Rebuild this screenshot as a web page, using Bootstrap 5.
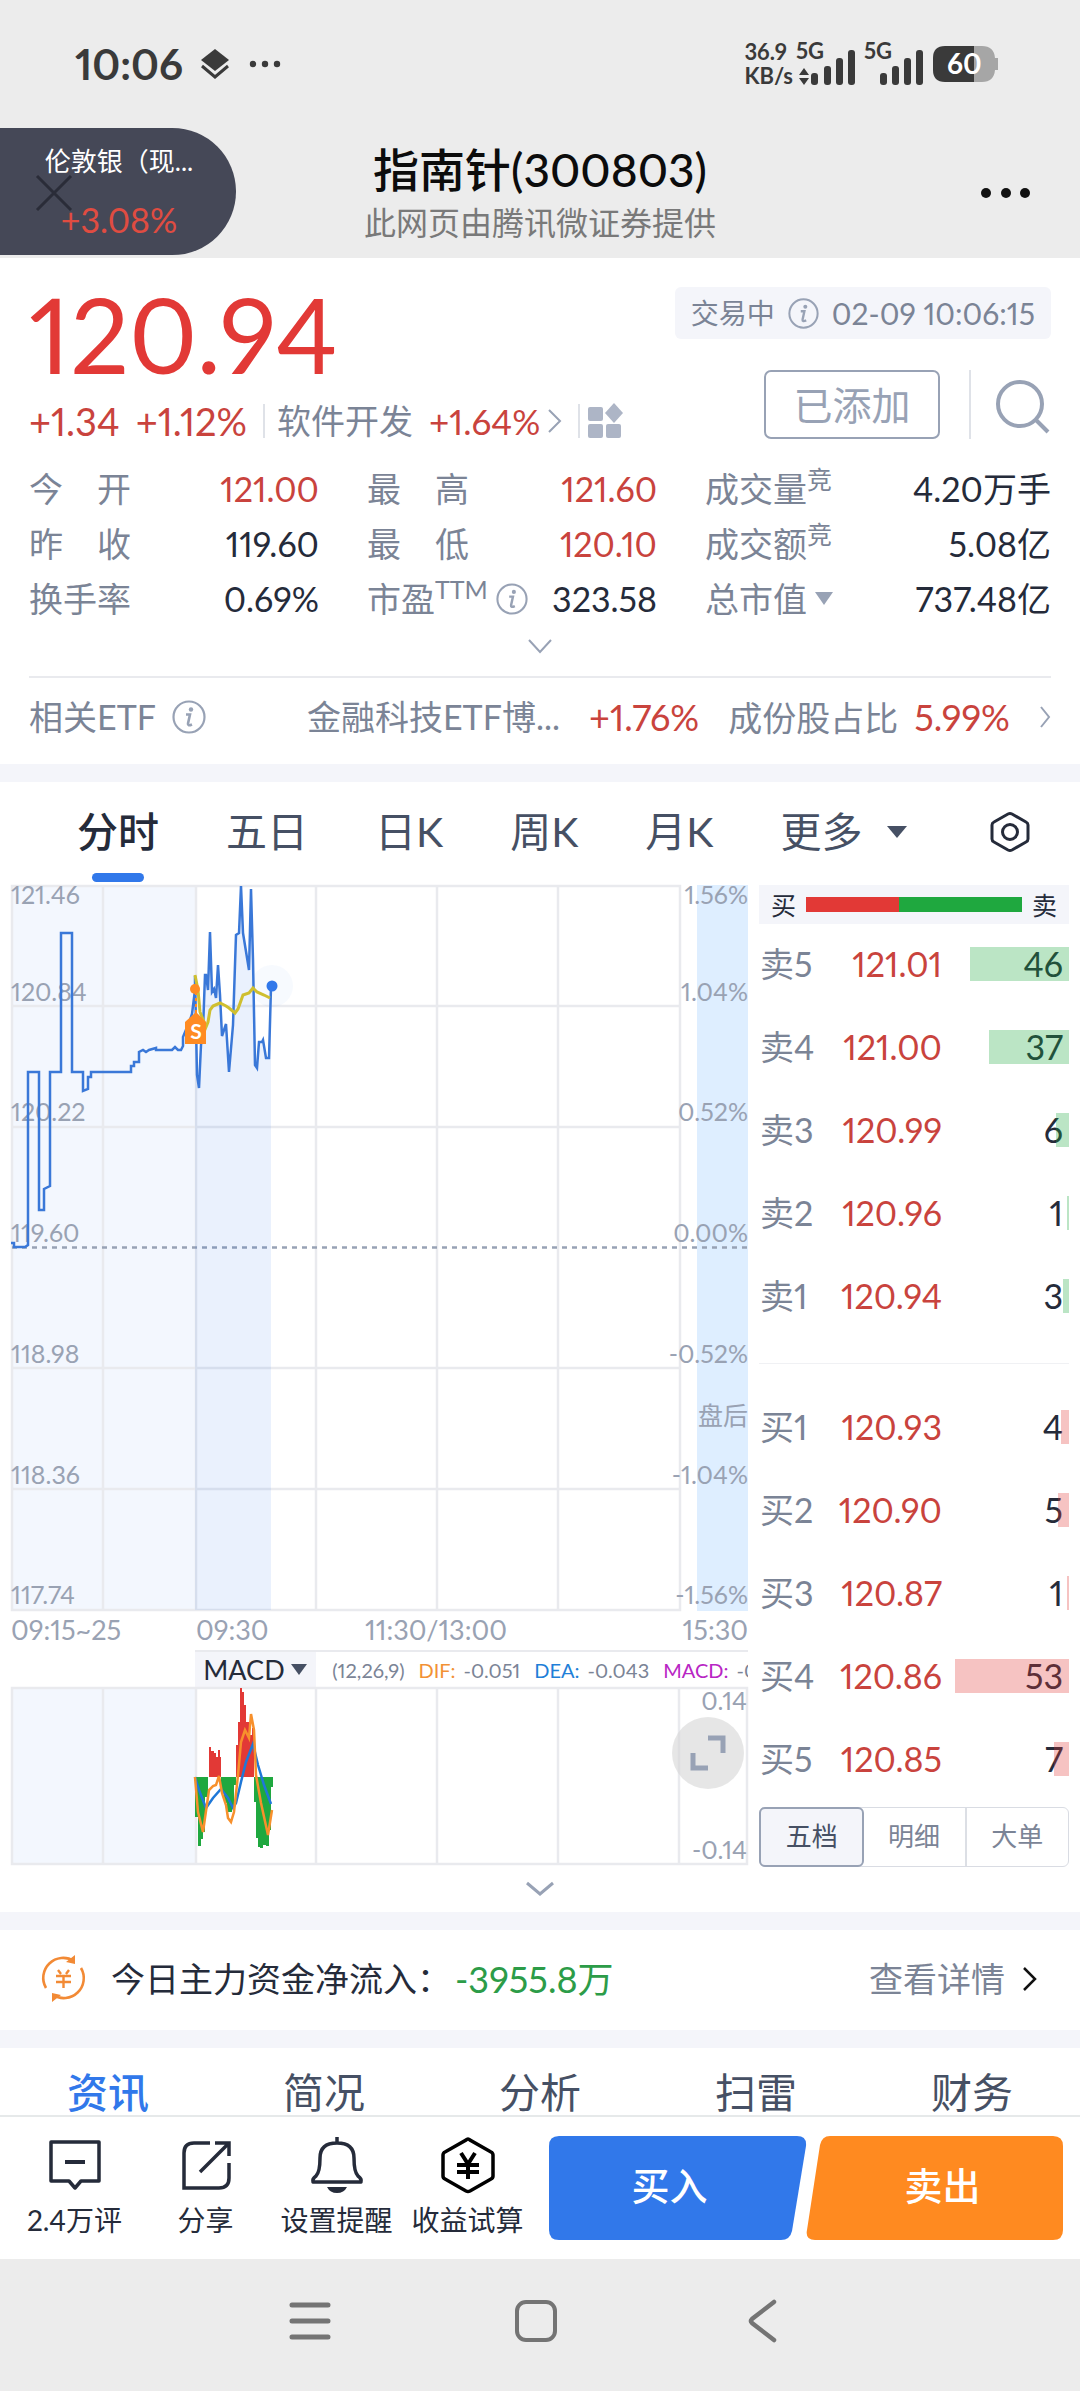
<!DOCTYPE html>
<html lang="zh-CN">
<head>
<meta charset="utf-8">
<meta name="viewport" content="width=device-width, initial-scale=1">
<title>指南针(300803)</title>
<link href="https://cdn.jsdelivr.net/npm/bootstrap@5.3.0/dist/css/bootstrap.min.css" rel="stylesheet">
<style>
  :root { --up:#e23936; --upsoft:#c9433d; --down:#1fa83f; --ink:#252b3a; --mute:#7b8496; --line:#e9eaee; --band:#f4f5fa; --brand:#3178ea; }
  body { font-family: Lato, "Noto Sans CJK SC", sans-serif; font-size: 34px; line-height: 40px; color: var(--ink); background: #fff; font-variant-numeric: proportional-nums; }
  svg { display: block; flex: none; overflow: visible; }
  a { color: inherit; text-decoration: none; }
  button, select { font: inherit; color: inherit; background: none; border: 0; padding: 0; }
  .up { color: var(--upsoft); }
  .mute { color: var(--mute); }
  .band { height: 18px; background: var(--band); }
  .shell { background: #ececec; }
  .statusbar { height: 108px; padding: 20px 81px 0 75px; color: #3a3a3a; }
  .clock { font-size: 42px; line-height: 42px; font-weight: 700; }
  .netinfo { font-size: 22px; line-height: 24px; font-weight: 700; }
  .titlebar { height: 150px; padding-top: 37px; }
  .titlebar h1 { font-size: 46px; line-height: 50px; font-weight: 500; color: #0c0c0c; }
  .titlebar p { font-size: 32px; line-height: 40px; color: #797979; margin-top: 8px; }
  .floatpill { left: 0; top: 20px; width: 236px; height: 127px; border-radius: 0 64px 64px 0; background: #454857; color: #fff; padding: 15px 40px 0 42px; }
  .floatpill .pname { font-size: 26px; line-height: 36px; }
  .floatpill .pchg { color: #e04c41; line-height: 40px; margin-top: 21px; }
  .floatpill svg { left: 35px; top: 46px; }
  .moredots { right: 49px; top: 78px; }
  .quote { padding: 29px 29px 0; }
  .price { font-size: 104px; line-height: 94px; color: var(--up); }
  .chgrow { font-size: 35px; line-height: 34px; }
  .chgrow .big { font-size: 38px; }
  .chgrow .mute { font-size: 34px; }
  .vsep { width: 2px; height: 34px; background: #dfe2e8; }
  .timetag { background: var(--band); border-radius: 6px; height: 52px; padding: 0 16px; font-size: 28px; gap: 13px; }
  .timetag time { font-size: 30px; }
  .actions { margin-top: 31px; }
  .added { border: 2px solid #98a2b5; border-radius: 7px; width: 176px; height: 69px; margin-right: 29px; font-size: 39px; line-height: 60px; color: #98a2b5; }
  .statgrid { display: grid; grid-template-columns: 290fr 290fr 346fr; column-gap: 48px; margin-top: 22px; }
  .stat { height: 55px; }
  .raised { font-size: 25px; line-height: 24px; align-self: flex-start; margin-top: 6px; }
  .unfold { height: 52px; padding-top: 13px; border-bottom: 2px solid var(--line); }
  .etf { height: 86px; padding-bottom: 8px; }
  .etf .up { font-size: 36px; }
  .ktabs { height: 103px; padding: 0 50px 0 77px; font-size: 41px; gap: 67px; color: #465064; }
  .ktabs a, .ktabs button { line-height: 50px; padding-bottom: 3px; }
  .ktabs a.active { color: var(--ink); font-weight: 500; }
  .ktabs a.active::after { content: ""; position: absolute; left: 15px; right: 15px; bottom: -22px; height: 9px; border-radius: 5px; background: var(--brand); }
  .board { display: grid; grid-template-columns: 737fr 310fr; column-gap: 11px; padding: 0 11px; }
  .board text { font-size: 25px; fill: #99a2b3; }
  .axis { display: grid; grid-template-columns: 185fr 119fr 242fr 191fr; height: 38px; font-size: 27px; line-height: 36px; color: #99a2b3; }
  .indic { height: 37px; font-size: 20px; line-height: 34px; gap: 8px; margin-left: 25%; border-top: 2px solid var(--line); }
  .indic label { width: 121px; height: 100%; background: var(--band); padding-left: 8px; margin-right: 8px; }
  .indic select { appearance: none; font-size: 27px; line-height: 34px; width: 84px; color: var(--ink); }
  .indic b { font-weight: 400; margin-left: 6px; }
  .expand { width: 72px; height: 72px; border-radius: 36px; background: rgba(215,215,215,.62); right: 4px; top: 30px; }
  .ratio-bar { height: 39px; background: var(--band); padding: 0 12px; gap: 10px; font-size: 25px; }
  .ratio-bar .track { height: 15px; background: var(--down); }
  .ratio-bar .track div { background: var(--up); }
  .lvl { height: 83px; padding: 0 6px 3px 1px; }
  .lvl span { width: 92px; }
  .lvl em { font-style: normal; flex: 1; text-align: right; margin-right: 121px; margin-left: -92px; }
  .lvl i { position: absolute; right: 0; top: 23px; height: 34px; background: rgba(31,168,63,.3); }
  .lvl.bid i { background: rgba(226,57,54,.3); }
  .lvl strong { position: absolute; right: 6px; font-weight: 400; }
  .midrule { height: 48px; padding-top: 24px; }
  .midrule hr { margin: 0; border-top: 1px solid #f0f1f4; opacity: 1; }
  .seg { height: 60px; margin-top: 5px; font-size: 26px; color: var(--mute); border: 1px solid #d9dce3; border-radius: 6px; }
  .seg button { flex: 1; padding-bottom: 3px; }
  .seg button + button + button { border-left: 2px solid #dcdfe5; }
  .seg .on { margin: -1px; background: var(--band); border: 2px solid #98a2b5; border-radius: 6px; color: #465064; }
  .fold { height: 45px; padding-top: 15px; }
  .fund { height: 100px; padding: 0 41px 2px; }
  .fund .flow { color: #2c9c48; font-size: 36px; margin-left: 4px; }
  .newstabs { height: 67px; padding-top: 20px; font-size: 41px; line-height: 50px; color: #465064; overflow: hidden; }
  .newstabs a.active { color: var(--brand); font-weight: 500; }
  .dock { height: 144px; border-top: 2px solid #e6e9ea; padding: 19px 17px 0 9px; background: #fff; }
  .tool { flex: 131 1 0; font-size: 28px; line-height: 36px; white-space: nowrap; }
  .tool svg { height: 58px; margin-bottom: 8px; }
  .trade { flex: 257 1 0; height: 104px; color: #fff; font-size: 38px; font-weight: 500; padding-bottom: 6px; }
  .trade svg { position: absolute; inset: 0; width: 100%; height: 100%; }
  .trade span { position: relative; }
  .sysnav { height: 132px; gap: 181px; padding: 0 28px 8px 20px; }
</style>
<script src="https://cdn.jsdelivr.net/npm/bootstrap@5.3.0/dist/js/bootstrap.bundle.min.js"></script>
</head>
<body>
<svg width="0" height="0" class="position-absolute" aria-hidden="true">
  <symbol id="info" viewBox="0 0 34 34"><circle cx="17" cy="17" r="15.5" fill="none" stroke="#98a2b5" stroke-width="2.2"/><circle cx="19" cy="9.500" r="2.200" fill="#98a2b5"/><path d="M14 14.500h4l-2 9q-.5 3 4 1" fill="none" stroke="#98a2b5" stroke-width="2.600"/></symbol>
</svg>

<header class="shell">
  <div class="statusbar d-flex align-items-center">
    <span class="clock">10:06</span>
    <svg class="ms-3" width="32" height="32" viewBox="0 0 32 32"><path d="M16 1l14 11-14 11L2 12z" fill="#3a3a3a"/><path d="M3 18l13 11 13-11" fill="none" stroke="#3a3a3a" stroke-width="3"/></svg>
    <svg class="ms-3" width="34" height="8" viewBox="0 0 34 8"><g fill="#3a3a3a"><circle cx="6" cy="4" r="3.200"/><circle cx="18" cy="4" r="3.200"/><circle cx="30" cy="4" r="3.200"/></g></svg>
    <div class="netinfo ms-auto">36.9<br>KB/s</div>
    <svg class="ms-1" width="60" height="44" viewBox="0 0 60 44"><g fill="#3a3a3a"><path d="M2 33l5-7 5 7zM2 36l5 7 5-7z"/><rect x="14" y="31" width="7" height="12" rx="3"/><rect x="27" y="24" width="7" height="19" rx="3"/><rect x="39" y="16" width="7" height="27" rx="3"/><rect x="51" y="8" width="7" height="35" rx="3"/></g><text x="-1" y="17" font-size="22" font-weight="700" fill="#3a3a3a">5G</text></svg>
    <svg class="ms-2" width="60" height="44" viewBox="0 0 60 44"><g fill="#3a3a3a"><rect x="15" y="31" width="7" height="12" rx="3"/><rect x="27" y="24" width="7" height="19" rx="3"/><rect x="39" y="16" width="7" height="27" rx="3"/><rect x="51" y="8" width="7" height="35" rx="3"/></g><text x="-1" y="17" font-size="22" font-weight="700" fill="#3a3a3a">5G</text></svg>
    <svg class="ms-2" width="66" height="36" viewBox="0 0 66 36"><path d="M40 0h9q12 0 13 12h3v12h-3q-1 12-13 12h-9z" fill="#a6a6a6"/><path d="M12 0h29v36H12Q0 36 0 24V12Q0 0 12 0z" fill="#3a3a3a"/><text x="14" y="28" font-size="28" font-weight="700" fill="#fff">60</text></svg>
  </div>
  <div class="titlebar position-relative text-center">
    <h1 class="mb-0">指南针(300803)</h1>
    <p class="mb-0">此网页由腾讯微证券提供</p>
    <div class="floatpill position-absolute">
      <svg class="position-absolute" width="38" height="38" viewBox="0 0 38 38"><path d="M2 2l34 34M36 2L2 36" stroke="#2a2c38" stroke-width="3"/></svg>
      <div class="pname position-relative text-nowrap">伦敦银（现...</div>
      <div class="pchg position-relative">+3.08%</div>
    </div>
    <button class="moredots position-absolute" aria-label="更多"><svg width="50" height="14" viewBox="0 0 50 14"><g fill="#111"><circle cx="5" cy="7" r="5"/><circle cx="25" cy="7" r="5"/><circle cx="44" cy="7" r="5"/></g></svg></button>
  </div>
</header>

<main>
<section class="quote">
  <div class="d-flex justify-content-between">
    <div class="d-flex flex-column justify-content-between">
      <div class="price">120.94</div>
      <div class="chgrow d-flex align-items-center text-nowrap">
        <span class="up big">+1.34</span><span class="up big ms-3 me-3">+1.12%</span><span class="vsep me-2"></span>
        <a href="#" class="d-flex align-items-center ms-1"><span class="mute">软件开发</span><span class="up ms-3">+1.64%</span>
        <svg class="ms-2" width="14" height="26" viewBox="0 0 14 26"><path d="M1 2l11 11L1 24" fill="none" stroke="#98a2b5" stroke-width="2"/></svg></a>
        <span class="vsep ms-3 me-2"></span>
        <svg width="36" height="36" viewBox="0 0 36 36"><g fill="#adb5c6"><rect x="0" y="4" width="15" height="14" rx="2"/><path d="M26 0l9 10-9 10-9-10z"/><rect x="0" y="21" width="15" height="14" rx="2"/><rect x="18" y="21" width="15" height="14" rx="2"/></g></svg>
      </div>
    </div>
    <div class="d-flex flex-column align-items-end justify-content-between">
      <div class="timetag d-flex align-items-center mute text-nowrap"><span>交易中</span><svg width="31" height="31"><use href="#info"/></svg><time>02-09 10:06:15</time></div>
      <div class="actions d-flex align-items-center">
        <button class="added">已添加</button>
        <span class="vsep h-100 me-4"></span>
        <button aria-label="搜索"><svg width="56" height="56" viewBox="0 0 56 56"><g fill="none" stroke="#98a2b5" stroke-width="4"><circle cx="25" cy="27" r="22"/><path d="M41 43l12 12"/></g></svg></button>
      </div>
    </div>
  </div>
  <div class="statgrid">
    <div class="stat d-flex align-items-center"><span class="mute">今　开</span><span class="up ms-auto">121.00</span></div>
    <div class="stat d-flex align-items-center"><span class="mute">最　高</span><span class="up ms-auto">121.60</span></div>
    <div class="stat d-flex align-items-center"><span class="mute">成交量</span><span class="mute raised">竞</span><span class="ms-auto">4.20万手</span></div>
    <div class="stat d-flex align-items-center"><span class="mute">昨　收</span><span class="ms-auto">119.60</span></div>
    <div class="stat d-flex align-items-center"><span class="mute">最　低</span><span class="up ms-auto">120.10</span></div>
    <div class="stat d-flex align-items-center"><span class="mute">成交额</span><span class="mute raised">竞</span><span class="ms-auto">5.08亿</span></div>
    <div class="stat d-flex align-items-center"><span class="mute">换手率</span><span class="ms-auto">0.69%</span></div>
    <div class="stat d-flex align-items-center"><span class="mute">市盈</span><span class="mute raised">TTM</span><svg class="ms-2" width="32" height="32"><use href="#info"/></svg><span class="ms-auto">323.58</span></div>
    <div class="stat d-flex align-items-center"><span class="mute">总市值</span><svg class="ms-2" width="18" height="13" viewBox="0 0 18 13"><path d="M0 0h18L9 13z" fill="#98a2b5"/></svg><span class="ms-auto">737.48亿</span></div>
  </div>
  <div class="unfold"><svg class="mx-auto" width="26" height="16" viewBox="0 0 26 16"><path d="M2 1l11 12L24 1" fill="none" stroke="#98a2b5" stroke-width="2"/></svg></div>
  <div class="etf d-flex align-items-center justify-content-between mute text-nowrap">
    <span class="d-flex align-items-center">相关ETF<svg class="ms-3" width="34" height="34"><use href="#info"/></svg></span>
    <span class="ms-5 ps-4">金融科技ETF博...</span><span class="up">+1.76%</span>
    <span>成份股占比<span class="up ms-3">5.99%</span></span>
    <svg width="12" height="22" viewBox="0 0 12 22"><path d="M2 1l8 10-8 10" fill="none" stroke="#98a2b5" stroke-width="2"/></svg>
  </div>
</section>
<div class="band"></div>

<nav class="ktabs d-flex align-items-center text-nowrap">
  <a href="#" class="active position-relative">分时</a><a href="#">五日</a><a href="#">日K</a><a href="#">周K</a><a href="#">月K</a>
  <button class="d-flex align-items-center">更多<svg class="ms-4" width="20" height="12" viewBox="0 0 20 12"><path d="M0 0h20L10 12z" fill="#465064"/></svg></button>
  <button class="ms-auto" aria-label="设置"><svg width="40" height="44" viewBox="0 0 40 44"><g fill="none" stroke="#252b3a" stroke-width="3"><path d="M18 4q2-1 4 0l14 8q2 1 2 3v14q0 2-2 3l-14 8q-2 1-4 0L4 32q-2-1-2-3V15q0-2 2-3z"/><circle cx="20" cy="22" r="7.500"/></g></svg></button>
</nav>

<section class="board">
  <div>
    <svg class="w-100 h-auto" viewBox="11 885 737 727">
      <rect x="11" y="886" width="184" height="724" fill="#f3f7fe"/>
      <rect x="697" y="885" width="51" height="726" fill="#deeeff"/>
      <g stroke="#e9eaee" stroke-width="2.500" fill="none"><path d="M12 886H680V1610H12zM12 1006H680M12 1127H680M12 1368H680M12 1489H680M103 886V1610M196 886V1610M316 886V1610M437 886V1610M558 886V1610"/></g>
      <path d="M12 1247.500H748" stroke="#98a2b5" stroke-width="2.500" stroke-dasharray="5 5"/>
      <circle cx="272" cy="986" r="21" fill="#3178ea" opacity=".04"/>
      <path d="M195 1610V976L197 1075 199 1088 201 1045 203 1030 205 975 208 990 210 932 212 992 216 998 218 965 220 995 222 1036 226 1024 229 1072 233 1025 236 935 239 933 241 885 243 933 249 970 251 889 253 960 255 1065 257 1068 259 1042 263 1040 266 1058 269 1058 271 987V1610z" fill="#3178ea" opacity=".1"/>
      <g><text x="11" y="904">121.46</text><text x="11" y="1001">120.84</text><text x="11" y="1121">120.22</text><text x="11" y="1242">119.60</text><text x="11" y="1363">118.98</text><text x="11" y="1484">118.36</text><text x="11" y="1604">117.74</text></g>
      <g text-anchor="end"><text x="748" y="904">1.56%</text><text x="748" y="1001">1.04%</text><text x="748" y="1121">0.52%</text><text x="748" y="1242">0.00%</text><text x="748" y="1363">-0.52%</text><text x="748" y="1425">盘后</text><text x="748" y="1484">-1.04%</text><text x="748" y="1604">-1.56%</text></g>
      <path d="M11 1243H14V1247H25L28 1245V1072H39V1210H44V1189L50 1186V1072H61V933H72V1072H83V1091L88 1089V1077H91V1072H131V1066H134V1062H139V1052L143 1050 146 1052 149 1050 156 1048V1050H172L175 1047 178 1050H181L183 1046V1037L190 1020 192 1014 195 990V976L197 1075 199 1088 201 1045 203 1030 205 975 206 975 208 990 210 932 212 992 214 989 216 998 218 965 220 995 222 1036 226 1024 229 1072 233 1025 236 935 239 933 241 886 243 933 249 970 251 889 253 960 255 1065 257 1068 259 1042 262 1042 263 1040 266 1058 269 1058 271 987" fill="none" stroke="#3a78d8" stroke-width="2.500"/>
      <path d="M195 975L198 990 200 1012 206 1027 208 1022 210 1010 213 1006 220 1003 226 1006 229 1008 235 1013 238 1009 243 995 249 993 253 988 257 992 264 995 270 998" fill="none" stroke="#cfbf2f" stroke-width="3"/>
      <path d="M196 992V1014" stroke="#ff8b22" stroke-width="2" stroke-dasharray="3 3"/>
      <circle cx="195" cy="989" r="5" fill="#ff8b22"/><circle cx="272" cy="986" r="5.500" fill="#3178ea"/>
      <path d="M196 1012L206 1022V1044H185V1022z" fill="#ff8b22"/><text x="196" y="1039" text-anchor="middle" style="font-size:21px;fill:#fff;font-weight:700">S</text>
    </svg>
    <div class="axis"><span>09:15~25</span><span>09:30</span><span class="text-center">11:30/13:00</span><span class="text-end">15:30</span></div>
    <div class="indic d-flex align-items-center mute overflow-hidden text-nowrap">
      <label class="d-flex align-items-center flex-shrink-0"><select aria-label="指标"><option>MACD</option></select><svg class="ms-1" width="16" height="11" viewBox="0 0 16 11"><path d="M0 0h16L8 11z" fill="#465064"/></svg></label>
      <span>(12,26,9)</span><b style="color:#f29135">DIF:</b><span>-0.051</span><b style="color:#1f7fd8">DEA:</b><span>-0.043</span><b style="color:#b826c4">MACD:</b><span>-0.017</span>
    </div>
    <div class="position-relative">
      <svg class="w-100 h-auto" viewBox="11 1687 737 179">
        <rect x="11" y="1687" width="184" height="177" fill="#f3f7fe"/>
        <path d="M12 1688H747V1864H12zM103 1688V1864M196 1688V1864M316 1688V1864M437 1688V1864M558 1688V1864M679 1688V1864" fill="none" stroke="#e9eaee" stroke-width="2.500"/>
        <path d="M195 1777V1817H198V1846H201V1839H203V1832H205V1797H208V1777zM221 1777V1792H224V1803H227V1812H232V1808H234V1785H236V1777zM254 1777V1802H256V1838H258V1847H260V1848H263V1845H266V1846H269V1830H271V1787H273V1777z" fill="#1fa83f"/>
        <path d="M209 1777V1747H211V1751H214V1753H216V1757H218V1750H220V1757H221V1777zM236 1777V1745H238V1722H240V1688H242V1692H244V1705H246V1722H249V1735H252V1728H254V1777z" fill="#e23936"/>
        <path d="M195 1777L199 1790 206 1808 213 1798 221 1789 228 1798 233 1808 236 1803 241 1782 246 1762 253 1744 258 1765 264 1785 271 1804" fill="none" stroke="#1f78d8" stroke-width="2.500"/>
        <path d="M195 1777L198 1812 203 1832 209 1790 213 1786 216 1785 219 1776 222 1793 226 1805 228 1818 231 1822 234 1812 238 1775 241 1742 245 1730 249 1738 251 1714 254 1730 256 1775 261 1803 268 1835 272 1810" fill="none" stroke="#f7902c" stroke-width="2.500"/>
        <g text-anchor="end"><text x="747" y="1710">0.14</text><text x="747" y="1859">-0.14</text></g>
      </svg>
      <button class="expand position-absolute d-flex align-items-center justify-content-center" aria-label="全屏"><svg width="36" height="36" viewBox="0 0 36 36"><path d="M18 3h15v15M3 18v15h15" fill="none" stroke="#98a2b5" stroke-width="5"/></svg></button>
    </div>
  </div>

  <div>
    <div class="ratio-bar d-flex align-items-center"><span>买</span><div class="track flex-grow-1 d-flex"><div style="width:43%"></div></div><span>卖</span></div>
    <div class="lvl d-flex align-items-center position-relative"><span class="mute">卖5</span><em class="up">121.01</em><strong>46</strong><i style="width:99px"></i></div>
    <div class="lvl d-flex align-items-center position-relative"><span class="mute">卖4</span><em class="up">121.00</em><strong>37</strong><i style="width:80px"></i></div>
    <div class="lvl d-flex align-items-center position-relative"><span class="mute">卖3</span><em class="up">120.99</em><strong>6</strong><i style="width:13px"></i></div>
    <div class="lvl d-flex align-items-center position-relative"><span class="mute">卖2</span><em class="up">120.96</em><strong>1</strong><i style="width:2px"></i></div>
    <div class="lvl d-flex align-items-center position-relative"><span class="mute">卖1</span><em class="up">120.94</em><strong>3</strong><i style="width:6px"></i></div>
    <div class="midrule"><hr></div>
    <div class="lvl bid d-flex align-items-center position-relative"><span class="mute">买1</span><em class="up">120.93</em><strong>4</strong><i style="width:8px"></i></div>
    <div class="lvl bid d-flex align-items-center position-relative"><span class="mute">买2</span><em class="up">120.90</em><strong>5</strong><i style="width:11px"></i></div>
    <div class="lvl bid d-flex align-items-center position-relative"><span class="mute">买3</span><em class="up">120.87</em><strong>1</strong><i style="width:2px"></i></div>
    <div class="lvl bid d-flex align-items-center position-relative"><span class="mute">买4</span><em class="up">120.86</em><strong>53</strong><i style="width:114px"></i></div>
    <div class="lvl bid d-flex align-items-center position-relative"><span class="mute">买5</span><em class="up">120.85</em><strong>7</strong><i style="width:15px"></i></div>
    <div class="seg d-flex"><button class="on">五档</button><button>明细</button><button>大单</button></div>
  </div>
</section>
<div class="fold"><svg class="mx-auto" width="30" height="16" viewBox="0 0 30 16"><path d="M2 1l13 11L28 1" fill="none" stroke="#98a2b5" stroke-width="3"/></svg></div>
<div class="band"></div>

<section class="fund d-flex align-items-center text-nowrap">
  <svg width="46" height="50" viewBox="0 0 46 50"><g fill="none" stroke="#f28a35" stroke-width="2.600"><path d="M5 34A20 20 0 0 1 33 7M40 14A20 20 0 0 1 12 41"/><path d="M17 16l3 4M28 16l-3 4M15 22h15M15 28h15M22.500 22v12" stroke-width="2.400"/></g><path d="M34 1v9l-9-2zM11 48v-9l9 2z" fill="#f28a35"/></svg>
  <span class="ms-4">今日主力资金净流入：</span><span class="flow">-3955.8万</span>
  <a href="#" class="ms-auto mute d-flex align-items-center">查看详情<svg class="ms-3" width="18" height="26" viewBox="0 0 18 26"><path d="M3 2l11 11L3 24" fill="none" stroke="#111" stroke-width="2.500"/></svg></a>
</section>
<div class="band"></div>
<nav class="newstabs d-flex text-center">
  <a href="#" class="active col">资讯</a><a href="#" class="col">简况</a><a href="#" class="col">分析</a><a href="#" class="col">扫雷</a><a href="#" class="col">财务</a>
</nav>
</main>

<footer>
  <div class="dock d-flex">
    <a href="#" class="tool text-center"><svg class="mx-auto" width="54" height="58" viewBox="0 0 54 58"><path d="M3 6h48v39H33l-6 7-6-7H3z" fill="none" stroke="#252b3a" stroke-width="3.500" stroke-linejoin="round"/><path d="M17 26h20" stroke="#252b3a" stroke-width="4"/></svg>2.4万评</a>
    <a href="#" class="tool text-center"><svg class="mx-auto" width="54" height="58" viewBox="0 0 54 58"><path d="M31 7H15Q5 7 5 17V52H40Q50 52 50 42V27" fill="none" stroke="#252b3a" stroke-width="3.500"/><path d="M36 7h14v13M50 7L21 36" fill="none" stroke="#252b3a" stroke-width="3.500"/></svg>分享</a>
    <a href="#" class="tool text-center"><svg class="mx-auto" width="54" height="58" viewBox="0 0 54 58"><path d="M27 1v5M3 46q-1-3 3-6 4-4 4-18 0-15 17-15t17 15q0 14 4 18 4 3 3 6z" fill="none" stroke="#252b3a" stroke-width="3.500" stroke-linejoin="round"/><path d="M17 51h20q-3 6-10 6t-10-6z" fill="#252b3a"/></svg>设置提醒</a>
    <a href="#" class="tool text-center"><svg class="mx-auto" width="54" height="58" viewBox="0 0 54 58"><path d="M27 3q1 0 2 1l21 12q2 1 2 3v21q0 2-2 3L29 55q-2 1-4 0L4 43q-2-1-2-3V19q0-2 2-3L25 4q1-1 2-1z" fill="none" stroke="#000" stroke-width="3.500"/><path d="M20 17l7 11 7-11M27 27v16M16 29h22M16 36h22" fill="none" stroke="#000" stroke-width="4"/></svg>收益试算</a>
    <button class="trade position-relative ms-3"><svg viewBox="0 0 257 104" preserveAspectRatio="none"><path d="M10 0H248Q258 0 257 10L243 95Q241 104 232 104H10Q0 104 0 94V10Q0 0 10 0z" fill="#3178ea"/></svg><span class="pe-3">买入</span></button>
    <button class="trade position-relative"><svg viewBox="0 0 257 104" preserveAspectRatio="none"><path d="M24 0H247Q257 0 257 10V94Q257 104 247 104H9Q-1 104 1 94L14 9Q16 0 24 0z" fill="#ff8a20"/></svg><span class="ps-3">卖出</span></button>
  </div>
  <div class="sysnav shell d-flex align-items-center justify-content-center">
    <button aria-label="菜单"><svg width="44" height="44" viewBox="0 0 44 44"><path d="M4 6h36M4 22h36M4 38h36" stroke="#747474" stroke-width="5" stroke-linecap="round"/></svg></button>
    <button aria-label="主页"><svg width="46" height="46" viewBox="0 0 46 46"><rect x="4" y="4" width="38" height="38" rx="9" fill="none" stroke="#747474" stroke-width="4"/></svg></button>
    <button aria-label="返回"><svg width="44" height="44" viewBox="0 0 44 44"><path d="M34 3L12 20q-2 2 0 4L34 41" fill="none" stroke="#747474" stroke-width="4.500" stroke-linecap="round"/></svg></button>
  </div>
</footer>
</body>
</html>
